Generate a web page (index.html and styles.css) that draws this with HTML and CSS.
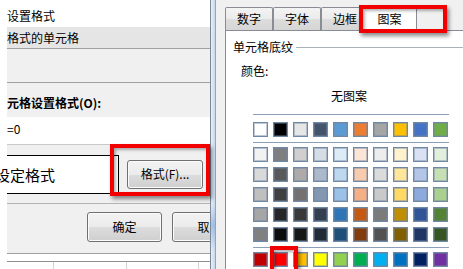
FILE: index.html
```html
<!DOCTYPE html>
<html lang="zh-CN">
<head>
<meta charset="utf-8">
<title>设置单元格格式</title>
<link rel="stylesheet" href="styles.css">
</head>
<body>
<div class="screen">
  <div class="left">
    <div class="row r-top"><span>设置格式</span></div>
    <div class="row r-sel"><span>格式的单元格</span></div>
    <div class="hr dark"></div>
    <div class="blank"></div>
    <div class="hr dark"></div>
    <div class="row r-label">元格设置格式(O):</div>
    <div class="row r-field">=0</div>
    <div class="hr light"></div>
    <div class="fmt-row">
      <div class="preview"><span>设定格式</span></div>
      <div class="btn btn-fmt">格式(F)...</div>
    </div>
    <div class="hr mid"></div>
    <div class="ok-row">
      <div class="btn btn-ok">确定</div>
      <div class="btn btn-ok">取消</div>
    </div>
    <div class="hr dark"></div>
    <div class="sheet">
      <div class="sheet-line">
        <div class="cell c1"></div>
        <div class="cell c2"></div>
        <div class="cell c3"></div>
      </div>
    </div>
  </div>
  <div class="divider"></div>
  <div class="right">
    <div class="tabs">
      <div class="tab">数字</div>
      <div class="tab">字体</div>
      <div class="tab">边框</div>
      <div class="tab active">图案</div>
    </div>
    <div class="panel">
      <div class="group-title"><span>单元格底纹</span><i class="gline"></i></div>
      <div class="color-label">颜色:</div>
      <div class="nopattern">无图案</div>
      <div class="palette">
        <div class="pline first"></div>
        <div class="swrow r1">
          <i class="sw" style="background:#ffffff"></i><i class="sw" style="background:#000000"></i><i class="sw" style="background:#e7e6e6"></i><i class="sw" style="background:#44546a"></i><i class="sw" style="background:#5b9bd5"></i><i class="sw" style="background:#ed7d31"></i><i class="sw" style="background:#a5a5a5"></i><i class="sw" style="background:#ffc000"></i><i class="sw" style="background:#4472c4"></i><i class="sw" style="background:#70ad47"></i>
        </div>
        <div class="pline"></div>
        <div class="swgrid">
          <i class="sw" style="background:#f2f2f2"></i><i class="sw" style="background:#7f7f7f"></i><i class="sw" style="background:#d0cece"></i><i class="sw" style="background:#d6dce4"></i><i class="sw" style="background:#ddebf7"></i><i class="sw" style="background:#fce4d6"></i><i class="sw" style="background:#ededed"></i><i class="sw" style="background:#fff2cc"></i><i class="sw" style="background:#d9e1f2"></i><i class="sw" style="background:#e2efda"></i>
          <i class="sw" style="background:#d9d9d9"></i><i class="sw" style="background:#595959"></i><i class="sw" style="background:#aeaaaa"></i><i class="sw" style="background:#acb9ca"></i><i class="sw" style="background:#bdd7ee"></i><i class="sw" style="background:#f8cbad"></i><i class="sw" style="background:#dbdbdb"></i><i class="sw" style="background:#ffe699"></i><i class="sw" style="background:#b4c6e7"></i><i class="sw" style="background:#c6e0b4"></i>
          <i class="sw" style="background:#bfbfbf"></i><i class="sw" style="background:#404040"></i><i class="sw" style="background:#757171"></i><i class="sw" style="background:#8497b0"></i><i class="sw" style="background:#9bc2e6"></i><i class="sw" style="background:#f4b084"></i><i class="sw" style="background:#c9c9c9"></i><i class="sw" style="background:#ffd966"></i><i class="sw" style="background:#8ea9db"></i><i class="sw" style="background:#a9d08e"></i>
          <i class="sw" style="background:#a6a6a6"></i><i class="sw" style="background:#262626"></i><i class="sw" style="background:#3a3838"></i><i class="sw" style="background:#333f4f"></i><i class="sw" style="background:#2f75b5"></i><i class="sw" style="background:#c65911"></i><i class="sw" style="background:#7b7b7b"></i><i class="sw" style="background:#bf8f00"></i><i class="sw" style="background:#305496"></i><i class="sw" style="background:#548235"></i>
          <i class="sw" style="background:#808080"></i><i class="sw" style="background:#0d0d0d"></i><i class="sw" style="background:#161616"></i><i class="sw" style="background:#222b35"></i><i class="sw" style="background:#1f4e78"></i><i class="sw" style="background:#833c0c"></i><i class="sw" style="background:#525252"></i><i class="sw" style="background:#806000"></i><i class="sw" style="background:#203764"></i><i class="sw" style="background:#375623"></i>
        </div>
        <div class="pline"></div>
        <div class="swrow r7">
          <i class="sw" style="background:#c00000"></i><i class="sw" style="background:#ff0000"></i><i class="sw" style="background:#ffc000"></i><i class="sw" style="background:#ffff00"></i><i class="sw" style="background:#92d050"></i><i class="sw" style="background:#00b050"></i><i class="sw" style="background:#00b0f0"></i><i class="sw" style="background:#0070c0"></i><i class="sw" style="background:#002060"></i><i class="sw" style="background:#7030a0"></i>
        </div>
      </div>
    </div>
  </div>
  <div class="hl hl-tab"></div>
  <div class="hl hl-btn"></div>
  <div class="hl hl-sw"></div>
</div>
</body>
</html>
```
FILE: styles.css
```css
html, body {
  margin: 0;
  padding: 0;
  background: #ffffff;
}
body {
  font-family: "Noto Sans CJK SC", "Microsoft YaHei", sans-serif;
  font-size: 12px;
  color: #000;
}
.screen {
  position: relative;
  width: 463px;
  height: 269px;
  display: flex;
  overflow: hidden;
}

/* ---------- left dialog ---------- */
.left {
  width: 210px;
  flex: none;
  box-sizing: border-box;
  padding-left: 7px;
  display: flex;
  flex-direction: column;
  overflow: hidden;
  background: linear-gradient(to right, #ffffff 7px, #f0f0f0 7px);
}
.row {
  display: flex;
  align-items: center;
  line-height: 16px;
  white-space: nowrap;
}
.r-top {
  height: 27px;
  box-sizing: border-box;
  padding-top: 5px;
  background: #ffffff;
}
.r-sel {
  height: 21px;
  background: #e5e5e5;
}
.hr { height: 1px; flex: none; }
.hr.dark { background: #a0a0a0; }
.hr.light { background: #c8c8c8; }
.hr.mid { background: #b4b4b4; }
.blank { height: 33px; }
.r-label {
  height: 34px;
  box-sizing: border-box;
  padding-top: 12px;
  align-items: flex-start;
  font-weight: bold;
}
.r-field {
  height: 27px;
  background: #ffffff;
  box-sizing: border-box;
  padding-top: 3px;
  align-items: flex-start;
  line-height: 17px;
}
.fmt-row {
  height: 58px;
  display: flex;
  align-items: center;
  gap: 8px;
  flex: none;
}
.preview {
  width: 119px;
  height: 39px;
  margin-left: -7px;
  box-sizing: border-box;
  border-right: 1px solid #000;
  background:
    linear-gradient(#000, #000) 7px 0 / 100% 1px no-repeat,
    linear-gradient(#000, #000) 7px 100% / 100% 1px no-repeat,
    #ffffff;
  display: flex;
  align-items: center;
  overflow: hidden;
  flex: none;
  font-size: 15px;
  white-space: nowrap;
}
.preview span { margin-left: -5px; }
.btn {
  box-sizing: border-box;
  border: 1px solid #707070;
  border-radius: 3px;
  background: linear-gradient(#f2f2f2 0%, #ebebeb 50%, #dddddd 50%, #cfcfcf 100%);
  box-shadow: inset 0 0 0 1px #fbfbfb;
  display: flex;
  align-items: center;
  justify-content: center;
  flex: none;
  white-space: nowrap;
  line-height: 16px;
}
.btn-fmt { width: 76px; height: 29px; }
.ok-row {
  height: 49px;
  box-sizing: border-box;
  padding-top: 8px;
  padding-left: 80px;
  display: flex;
  align-items: flex-start;
  gap: 10px;
  flex: none;
}
.btn-ok { width: 75px; height: 30px; }
.sheet {
  height: 15px;
  background: #fff;
  box-sizing: border-box;
  padding-top: 7px;
  margin-left: -7px;
  padding-left: 7px;
  flex: none;
}
.sheet-line {
  display: flex;
  height: 8px;
  border-top: 1px solid #8f8f8f;
}
.cell { border-right: 1px solid #d4d4d4; flex: none; height: 8px; }
.c1 { width: 46px; }
.c2 { width: 72px; }
.c3 { width: 71px; }

/* ---------- divider ---------- */
.divider {
  width: 6px;
  flex: none;
  box-sizing: border-box;
  border-left: 1px solid #7d8896;
  border-right: 1px solid #98a4b4;
  background:
    linear-gradient(to bottom, rgba(120,160,210,0) 0px, rgba(120,160,210,0) 205px, rgba(120,160,210,0.55) 225px, rgba(120,160,210,0) 250px),
    linear-gradient(to right, #e6eef8, #c7d9ef);
}

/* ---------- right dialog ---------- */
.right {
  width: 247px;
  flex: none;
  background: #f0f0f0;
  display: flex;
  flex-direction: column;
}
.tabs {
  height: 30px;
  box-sizing: border-box;
  padding-left: 9px;
  display: flex;
  align-items: flex-end;
  flex: none;
}
.tab {
  width: 48px;
  height: 23px;
  box-sizing: border-box;
  border: 1px solid #898c95;
  border-bottom: none;
  border-radius: 2px 2px 0 0;
  background: linear-gradient(#f3f3f3, #ebebeb 50%, #dddddd 50%, #d5d5d5);
  display: flex;
  align-items: center;
  justify-content: center;
  line-height: 16px;
  flex: none;
}
.tab.active {
  position: relative;
  z-index: 2;
  width: 55px;
  height: 26px;
  margin-left: -7px;
  margin-bottom: -1px;
  background: #ffffff;
}
.panel {
  flex: 1;
  margin-left: 9px;
  border-top: 1px solid #898c95;
  border-left: 1px solid #898c95;
  background: #ffffff;
  display: flex;
  flex-direction: column;
}
.group-title {
  display: flex;
  align-items: center;
  padding-top: 8px;
  padding-left: 7px;
  line-height: 16px;
}
.gline {
  flex: 1;
  height: 1px;
  margin-left: 3px;
  background: #a9b2bc;
}
.color-label {
  margin-top: 8px;
  padding-left: 15px;
  line-height: 16px;
}
.nopattern {
  margin-top: 9px;
  margin-left: 27px;
  width: 196px;
  box-sizing: border-box;
  padding-right: 4px;
  text-align: center;
  line-height: 16px;
}
.palette {
  margin-left: 27px;
  width: 196px;
  display: flex;
  flex-direction: column;
}
.pline {
  height: 1px;
  background: #8aa0b8;
  margin-top: 5px;
}
.pline.first { margin-top: 10px; }
.swrow, .swgrid {
  display: grid;
  grid-template-columns: repeat(10, 15px);
  column-gap: 5px;
  row-gap: 5px;
  margin-top: 4px;
}
.swrow.r1 { margin-top: 7px; }
.sw {
  display: block;
  width: 15px;
  height: 15px;
  box-sizing: border-box;
  border: 1px solid #7088a4;
  box-shadow: inset 0 0 0 1px rgba(112, 136, 164, 0.45);
}

/* ---------- red highlight overlays ---------- */
.hl {
  position: absolute;
  box-sizing: border-box;
  border: 4px solid #f20000;
  box-shadow: 2px 3px 4px rgba(0, 0, 0, 0.45), inset 2px 2px 3px rgba(0, 0, 0, 0.3);
  z-index: 5;
}
.hl-tab { left: 359px; top: 5px; width: 88px; height: 28px; }
.hl-btn { left: 110px; top: 144px; width: 100px; height: 52px; }
.hl-sw { left: 270px; top: 246px; width: 28px; height: 30px; }
```
